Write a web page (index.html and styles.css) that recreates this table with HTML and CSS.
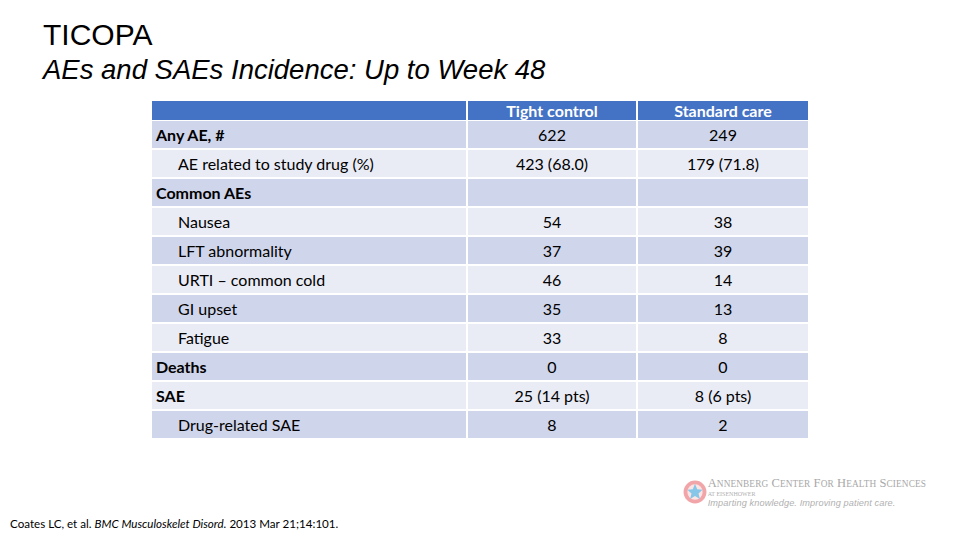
FILE: index.html
```html
<!DOCTYPE html>
<html>
<head>
<meta charset="utf-8">
<link rel="stylesheet" href="styles.css">
</head>
<body>
<div class="slide">
  <header class="titles">
    <h1 class="title">TICOPA</h1>
    <h2 class="subtitle">AEs and SAEs Incidence: Up to Week 48</h2>
  </header>
  <div class="table">
    <div class="row head"><div class="c1"></div><div class="c2">Tight control</div><div class="c3">Standard care</div></div>
    <div class="row dark"><div class="c1 b">Any AE, #</div><div class="c2">622</div><div class="c3">249</div></div>
    <div class="row light"><div class="c1 ind">AE related to study drug (%)</div><div class="c2">423 (68.0)</div><div class="c3">179 (71.8)</div></div>
    <div class="row dark"><div class="c1 b">Common AEs</div><div class="c2"></div><div class="c3"></div></div>
    <div class="row light"><div class="c1 ind">Nausea</div><div class="c2">54</div><div class="c3">38</div></div>
    <div class="row dark"><div class="c1 ind">LFT abnormality</div><div class="c2">37</div><div class="c3">39</div></div>
    <div class="row light"><div class="c1 ind">URTI – common cold</div><div class="c2">46</div><div class="c3">14</div></div>
    <div class="row dark"><div class="c1 ind">GI upset</div><div class="c2">35</div><div class="c3">13</div></div>
    <div class="row light"><div class="c1 ind">Fatigue</div><div class="c2">33</div><div class="c3">8</div></div>
    <div class="row dark"><div class="c1 b">Deaths</div><div class="c2">0</div><div class="c3">0</div></div>
    <div class="row light"><div class="c1 b">SAE</div><div class="c2">25 (14 pts)</div><div class="c3">8 (6 pts)</div></div>
    <div class="row dark"><div class="c1 ind">Drug-related SAE</div><div class="c2">8</div><div class="c3">2</div></div>
  </div>
  <div class="footer">
    <div class="cite">Coates LC, et al. <i>BMC Musculoskelet Disord.</i> 2013 Mar 21;14:101.</div>
    <div class="logo">
      <svg class="mark" width="24" height="24" viewBox="0 0 22 22">
        <circle cx="11" cy="11" r="10.5" fill="#f2a5a8"/>
        <circle cx="11" cy="11" r="7" fill="#fbe4e4"/>
        <polygon points="11,3.5 13,8.5 18,9 14.2,12.4 15.5,17.5 11,14.7 6.5,17.5 7.8,12.4 4,9 9,8.5" fill="#86c6e8"/>
      </svg>
      <div class="logotext">
        <div class="lname">A<span>NNENBERG</span> C<span>ENTER</span> F<span>OR</span> H<span>EALTH</span> S<span>CIENCES</span></div>
        <div class="lsub">AT EISENHOWER</div>
        <div class="ltag">Imparting knowledge. Improving patient care.</div>
      </div>
    </div>
  </div>
</div>
</body>
</html>
```
FILE: styles.css
```css
html, body { margin: 0; padding: 0; background: #fff; }
.slide {
  width: 960px; height: 540px; position: relative; overflow: hidden;
  font-family: "Liberation Sans", sans-serif; color: #000;
  display: flex; flex-direction: column;
}
.titles { padding: 18px 0 0 43px; }
.title {
  margin: 0; font-weight: 400; font-size: 30px; line-height: 34px;
  font-family: "Liberation Sans", sans-serif; letter-spacing: 0;
}
.subtitle {
  margin: 0; font-weight: 400; font-style: italic; font-size: 27.5px; line-height: 35px;
  font-family: "Liberation Sans", sans-serif; letter-spacing: 0;
}
.table {
  margin: 14px 0 0 152px; width: 656px;
  display: flex; flex-direction: column; gap: 2px;
  font-family: "Lato", sans-serif; font-size: 16px;
}
.row { display: grid; grid-template-columns: 314px 168px 170px; column-gap: 2px; height: 27px; }
.row > div { display: flex; align-items: center; }
.row .c2, .row .c3 { justify-content: center; }
.row.head { height: 18px; }
.head > div { background: #4472c4; color: #fff; font-weight: 700; font-size: 16px; }
.head .c2, .head .c3 { align-items: flex-start; padding-top: 0; line-height: 19px; }
.dark > div { background: #cfd5ea; }
.light > div { background: #e9ebf5; }
.c1 { padding-left: 4px; }
.c1.b { font-weight: 700; }
.c1.ind { padding-left: 26px; }
.footer { flex: 1; display: flex; justify-content: space-between; align-items: flex-end; padding: 0 34px 9px 10px; }
.cite { font-family: "Lato", sans-serif; font-size: 11.6px; line-height: 14px; }
.logo { display: flex; align-items: flex-start; gap: 1px; margin-bottom: 22px; color: #aaa; }
.mark { margin-top: 4px; }
.logotext { display: flex; flex-direction: column; }
.lname { font-family: "Liberation Serif", serif; font-size: 12.5px; line-height: 14px; letter-spacing: 0.1px; color: #a8a8a8; }
.lname span { font-size: 9.3px; }
.lsub { font-family: "Liberation Serif", serif; font-size: 6px; line-height: 7px; color: #b0b0b0; }
.ltag { font-family: "Liberation Sans", sans-serif; font-style: italic; font-size: 9.2px; line-height: 11px; color: #b0b0b0; letter-spacing: 0.1px; }
```
